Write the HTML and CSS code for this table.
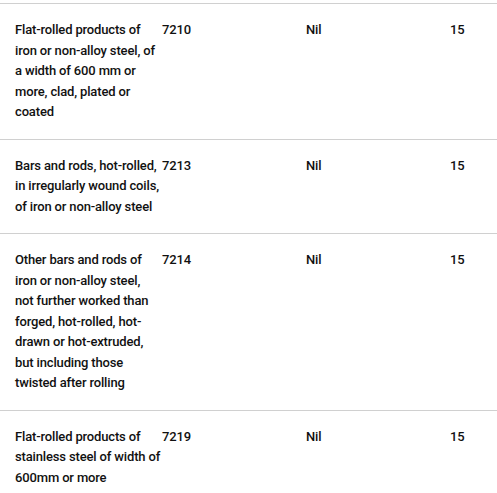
FILE: index.html
```html
<!DOCTYPE html>
<html lang="en">
<head>
<meta charset="utf-8">
<link rel="stylesheet" href="styles.css">
</head>
<body>
<div class="table">
  <div class="row">
    <div class="cell desc">Flat-rolled products of iron or non-alloy steel, of a width of 600 mm or more, clad, plated or coated</div>
    <div class="cell code">7210</div>
    <div class="cell nil">Nil</div>
    <div class="cell rate">15</div>
  </div>
  <div class="row">
    <div class="cell desc">Bars and rods, hot-rolled, in irregularly wound coils, of iron or non-alloy steel</div>
    <div class="cell code">7213</div>
    <div class="cell nil">Nil</div>
    <div class="cell rate">15</div>
  </div>
  <div class="row">
    <div class="cell desc">Other bars and rods of iron or non-alloy steel, not&nbsp;further worked than forged, hot-rolled, hot-drawn or hot-extruded, but including those twisted after rolling</div>
    <div class="cell code">7214</div>
    <div class="cell nil">Nil</div>
    <div class="cell rate">15</div>
  </div>
  <div class="row">
    <div class="cell desc">Flat-rolled products of stainless steel of width of 600mm or more</div>
    <div class="cell code">7219</div>
    <div class="cell nil">Nil</div>
    <div class="cell rate">15</div>
  </div>
</div>
</body>
</html>
```
FILE: styles.css
```css
html, body {
  margin: 0;
  padding: 0;
  background: #ffffff;
}
body {
  font-family: Roboto, "Liberation Sans", sans-serif;
  font-size: 13px;
  font-weight: 500;
  letter-spacing: -0.15px;
  line-height: 20.5px;
  color: #111111;
}
.table {
  padding-top: 3px;
}
.row {
  display: grid;
  grid-template-columns: 147px 144px 144px 1fr;
  padding: 16px 0 16px 15px;
  border-top: 1px solid #d0d0d0;
}
.cell {
  min-width: 0;
}
.desc {
  padding-right: 0;
}
```
